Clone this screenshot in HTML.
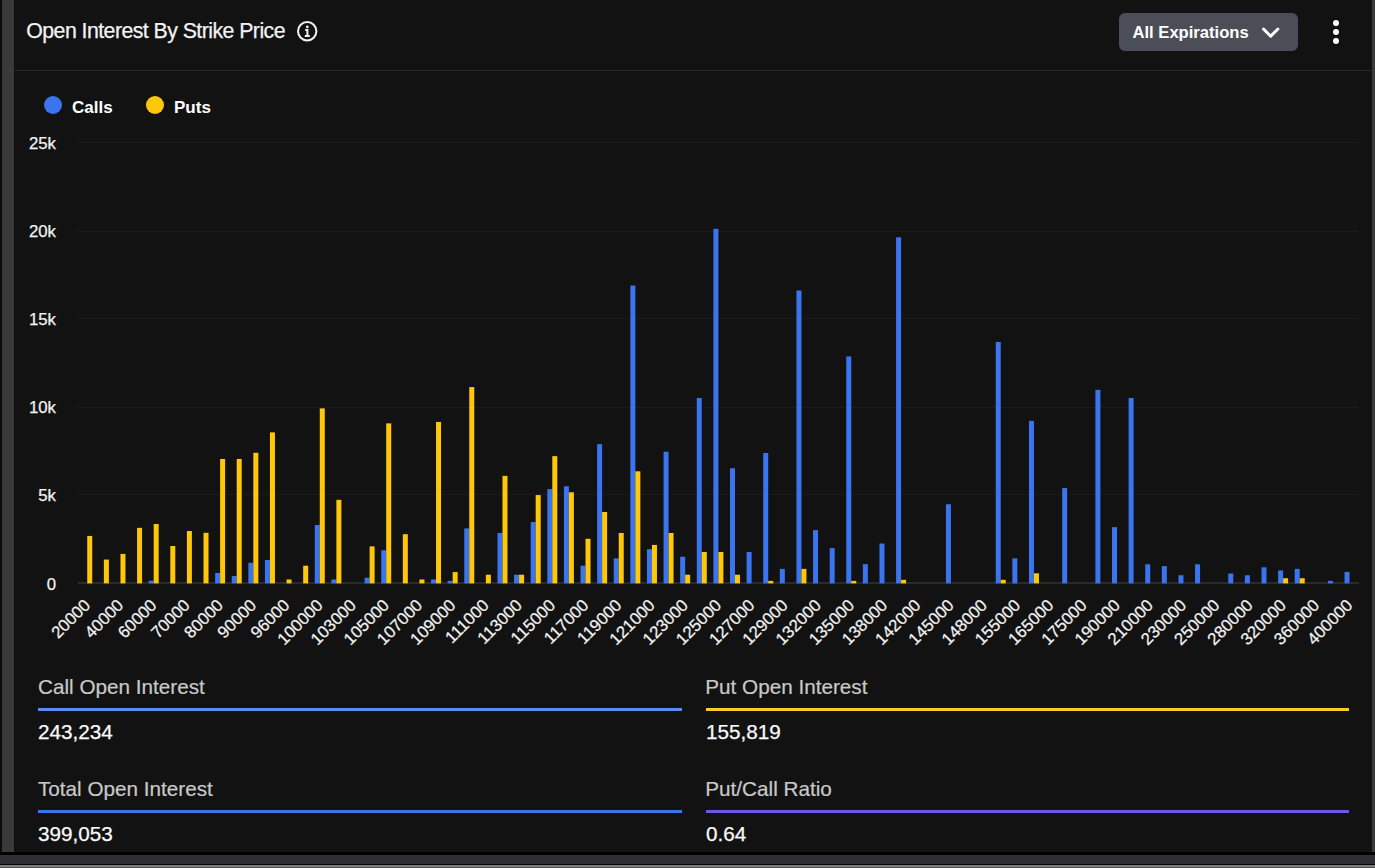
<!DOCTYPE html>
<html><head><meta charset="utf-8"><style>
html,body{margin:0;padding:0;}
body{width:1375px;height:868px;overflow:hidden;position:relative;background:#3a3a3a;font-family:"Liberation Sans",sans-serif;}
.abs{position:absolute;}
#leftdark{left:0;top:0;width:2px;height:852px;background:#0b0b0b;}
#card{left:14px;top:0;width:1358px;height:852px;background:#121212;border-left:1px solid #0e0e0e;box-sizing:border-box;}
#b1{left:0;top:852px;width:1375px;height:3px;background:#000;}
#b2{left:0;top:855px;width:1375px;height:9px;background:#2e2f32;}
#b3{left:0;top:864px;width:1375px;height:1px;background:#050505;}
#b4{left:0;top:865px;width:1375px;height:3px;background:linear-gradient(#808080 0,#7a7a7a 66%,#555 66%);}
#hdrline{left:15px;top:70px;width:1357px;height:1px;background:#282828;}
.title{left:26.3px;top:18.7px;font-size:21.3px;letter-spacing:-0.55px;color:#f2f2f2;-webkit-text-stroke:0.25px #f2f2f2;white-space:nowrap;line-height:24px;}
#btn{left:1119px;top:13px;width:179px;height:38px;background:#4b4e57;border-radius:6px;}
.btntxt{left:1132.5px;top:22.8px;font-size:16.6px;font-weight:700;color:#fff;white-space:nowrap;line-height:20px;}
.leg{font-size:17px;font-weight:700;color:#fff;white-space:nowrap;line-height:20px;top:97.7px;}
.dot{width:18px;height:18px;border-radius:50%;top:96.4px;}
svg text{font-family:"Liberation Sans",sans-serif;fill:#f2f2f2;stroke:#f2f2f2;stroke-width:0.25px;}
.yl{font-size:16.8px;}
.xl{font-size:16.8px;}
.lab{font-size:20.7px;color:#c9c9c9;-webkit-text-stroke:0.2px #c9c9c9;white-space:nowrap;line-height:24px;}
.val{font-size:20.7px;color:#fafafa;-webkit-text-stroke:0.25px #fafafa;white-space:nowrap;line-height:24px;}
.bar{height:3px;}
</style></head><body>
<div id="leftdark" class="abs"></div>
<div id="card" class="abs"></div>
<div id="b1" class="abs"></div><div id="b2" class="abs"></div><div id="b3" class="abs"></div><div id="b4" class="abs"></div>
<div id="hdrline" class="abs"></div>
<div class="abs title">Open Interest By Strike Price</div>
<svg class="abs" style="left:296px;top:20px" width="22" height="22" viewBox="0 0 22 22"><circle cx="11.2" cy="11.3" r="9.2" fill="none" stroke="#f2f2f2" stroke-width="2"/><circle cx="11.3" cy="6.9" r="1.35" fill="#f2f2f2"/><path d="M9.2 9.9h2.2v6.3M8.8 16.1h5" stroke="#f2f2f2" stroke-width="2" fill="none"/></svg>
<div id="btn" class="abs"></div>
<div class="abs btntxt">All Expirations</div>
<svg class="abs" style="left:1261px;top:26px" width="20" height="13" viewBox="0 0 20 13"><path d="M2.5 3 L9.7 10.2 L16.9 3" stroke="#fff" stroke-width="2.95" fill="none" stroke-linecap="round" stroke-linejoin="round"/></svg>
<div class="abs" style="left:1333px;top:20px;width:6px;height:6px;border-radius:50%;background:#fff"></div>
<div class="abs" style="left:1333px;top:29px;width:6px;height:6px;border-radius:50%;background:#fff"></div>
<div class="abs" style="left:1333px;top:38px;width:6px;height:6px;border-radius:50%;background:#fff"></div>
<div class="abs dot" style="left:44px;background:#3a74ef"></div>
<div class="abs leg" style="left:72px">Calls</div>
<div class="abs dot" style="left:146px;background:#ffc70a"></div>
<div class="abs leg" style="left:174px">Puts</div>
<svg class="abs" style="left:0;top:0" width="1375" height="868" viewBox="0 0 1375 868">
<rect x="78" y="142" width="1280" height="1" fill="#1c1c1c"/>
<rect x="78" y="231" width="1280" height="1" fill="#1c1c1c"/>
<rect x="78" y="318" width="1280" height="1" fill="#1c1c1c"/>
<rect x="78" y="407" width="1280" height="1" fill="#1c1c1c"/>
<rect x="78" y="494" width="1280" height="1" fill="#1c1c1c"/>
<rect x="78" y="582.4" width="1281" height="1.2" fill="#3a3a3a"/>
<rect x="87.25" y="535.95" width="5" height="47.45" fill="#ffc70a"/>
<rect x="103.86" y="559.57" width="5" height="23.83" fill="#ffc70a"/>
<rect x="120.47" y="553.93" width="5" height="29.47" fill="#ffc70a"/>
<rect x="137.08" y="527.85" width="5" height="55.55" fill="#ffc70a"/>
<rect x="148.69" y="580.71" width="5" height="2.69" fill="#3a74ef"/>
<rect x="153.69" y="523.97" width="5" height="59.43" fill="#ffc70a"/>
<rect x="170.30" y="546.00" width="5" height="37.40" fill="#ffc70a"/>
<rect x="186.90" y="531.02" width="5" height="52.38" fill="#ffc70a"/>
<rect x="203.51" y="532.78" width="5" height="50.62" fill="#ffc70a"/>
<rect x="215.12" y="572.96" width="5" height="10.44" fill="#3a74ef"/>
<rect x="220.12" y="458.96" width="5" height="124.44" fill="#ffc70a"/>
<rect x="231.73" y="575.95" width="5" height="7.45" fill="#3a74ef"/>
<rect x="236.73" y="458.96" width="5" height="124.44" fill="#ffc70a"/>
<rect x="248.34" y="562.74" width="5" height="20.66" fill="#3a74ef"/>
<rect x="253.34" y="452.79" width="5" height="130.61" fill="#ffc70a"/>
<rect x="264.95" y="559.92" width="5" height="23.48" fill="#3a74ef"/>
<rect x="269.95" y="432.35" width="5" height="151.05" fill="#ffc70a"/>
<rect x="286.56" y="579.48" width="5" height="3.92" fill="#ffc70a"/>
<rect x="303.17" y="565.73" width="5" height="17.67" fill="#ffc70a"/>
<rect x="314.78" y="525.03" width="5" height="58.37" fill="#3a74ef"/>
<rect x="319.78" y="408.39" width="5" height="175.01" fill="#ffc70a"/>
<rect x="331.38" y="579.48" width="5" height="3.92" fill="#3a74ef"/>
<rect x="336.38" y="499.83" width="5" height="83.57" fill="#ffc70a"/>
<rect x="364.60" y="577.71" width="5" height="5.69" fill="#3a74ef"/>
<rect x="369.60" y="546.35" width="5" height="37.05" fill="#ffc70a"/>
<rect x="381.21" y="550.23" width="5" height="33.17" fill="#3a74ef"/>
<rect x="386.21" y="423.36" width="5" height="160.04" fill="#ffc70a"/>
<rect x="402.82" y="534.19" width="5" height="49.21" fill="#ffc70a"/>
<rect x="419.43" y="579.48" width="5" height="3.92" fill="#ffc70a"/>
<rect x="431.04" y="579.48" width="5" height="3.92" fill="#3a74ef"/>
<rect x="436.04" y="421.95" width="5" height="161.45" fill="#ffc70a"/>
<rect x="447.65" y="580.89" width="5" height="2.51" fill="#3a74ef"/>
<rect x="452.65" y="572.08" width="5" height="11.32" fill="#ffc70a"/>
<rect x="464.26" y="528.38" width="5" height="55.02" fill="#3a74ef"/>
<rect x="469.26" y="387.07" width="5" height="196.33" fill="#ffc70a"/>
<rect x="485.87" y="574.72" width="5" height="8.68" fill="#ffc70a"/>
<rect x="497.48" y="532.96" width="5" height="50.44" fill="#3a74ef"/>
<rect x="502.48" y="475.87" width="5" height="107.53" fill="#ffc70a"/>
<rect x="514.08" y="574.72" width="5" height="8.68" fill="#3a74ef"/>
<rect x="519.08" y="574.72" width="5" height="8.68" fill="#ffc70a"/>
<rect x="530.69" y="522.03" width="5" height="61.37" fill="#3a74ef"/>
<rect x="535.69" y="495.08" width="5" height="88.32" fill="#ffc70a"/>
<rect x="547.30" y="489.09" width="5" height="94.31" fill="#3a74ef"/>
<rect x="552.30" y="456.14" width="5" height="127.26" fill="#ffc70a"/>
<rect x="563.91" y="486.27" width="5" height="97.13" fill="#3a74ef"/>
<rect x="568.91" y="492.26" width="5" height="91.14" fill="#ffc70a"/>
<rect x="580.52" y="565.73" width="5" height="17.67" fill="#3a74ef"/>
<rect x="585.52" y="538.77" width="5" height="44.63" fill="#ffc70a"/>
<rect x="597.13" y="444.15" width="5" height="139.25" fill="#3a74ef"/>
<rect x="602.13" y="511.99" width="5" height="71.41" fill="#ffc70a"/>
<rect x="613.74" y="558.33" width="5" height="25.07" fill="#3a74ef"/>
<rect x="618.74" y="532.96" width="5" height="50.44" fill="#ffc70a"/>
<rect x="630.35" y="285.57" width="5" height="297.83" fill="#3a74ef"/>
<rect x="635.35" y="471.29" width="5" height="112.11" fill="#ffc70a"/>
<rect x="646.96" y="549.17" width="5" height="34.23" fill="#3a74ef"/>
<rect x="651.96" y="544.94" width="5" height="38.46" fill="#ffc70a"/>
<rect x="663.57" y="451.73" width="5" height="131.67" fill="#3a74ef"/>
<rect x="668.57" y="532.96" width="5" height="50.44" fill="#ffc70a"/>
<rect x="680.17" y="556.75" width="5" height="26.65" fill="#3a74ef"/>
<rect x="685.17" y="574.72" width="5" height="8.68" fill="#ffc70a"/>
<rect x="696.78" y="397.99" width="5" height="185.41" fill="#3a74ef"/>
<rect x="701.78" y="551.99" width="5" height="31.41" fill="#ffc70a"/>
<rect x="713.39" y="228.84" width="5" height="354.56" fill="#3a74ef"/>
<rect x="718.39" y="551.99" width="5" height="31.41" fill="#ffc70a"/>
<rect x="730.00" y="468.29" width="5" height="115.11" fill="#3a74ef"/>
<rect x="735.00" y="574.72" width="5" height="8.68" fill="#ffc70a"/>
<rect x="746.61" y="551.99" width="5" height="31.41" fill="#3a74ef"/>
<rect x="763.22" y="452.96" width="5" height="130.44" fill="#3a74ef"/>
<rect x="768.22" y="580.89" width="5" height="2.51" fill="#ffc70a"/>
<rect x="779.83" y="568.90" width="5" height="14.50" fill="#3a74ef"/>
<rect x="796.44" y="290.51" width="5" height="292.89" fill="#3a74ef"/>
<rect x="801.44" y="568.90" width="5" height="14.50" fill="#ffc70a"/>
<rect x="813.05" y="530.14" width="5" height="53.26" fill="#3a74ef"/>
<rect x="829.66" y="548.11" width="5" height="35.29" fill="#3a74ef"/>
<rect x="846.26" y="356.41" width="5" height="226.99" fill="#3a74ef"/>
<rect x="851.26" y="580.89" width="5" height="2.51" fill="#ffc70a"/>
<rect x="862.87" y="564.15" width="5" height="19.25" fill="#3a74ef"/>
<rect x="879.48" y="543.53" width="5" height="39.87" fill="#3a74ef"/>
<rect x="896.09" y="237.30" width="5" height="346.10" fill="#3a74ef"/>
<rect x="901.09" y="579.83" width="5" height="3.57" fill="#ffc70a"/>
<rect x="945.92" y="504.24" width="5" height="79.16" fill="#3a74ef"/>
<rect x="995.75" y="341.96" width="5" height="241.44" fill="#3a74ef"/>
<rect x="1000.75" y="579.83" width="5" height="3.57" fill="#ffc70a"/>
<rect x="1012.35" y="558.33" width="5" height="25.07" fill="#3a74ef"/>
<rect x="1028.96" y="420.90" width="5" height="162.50" fill="#3a74ef"/>
<rect x="1033.96" y="573.31" width="5" height="10.09" fill="#ffc70a"/>
<rect x="1062.18" y="488.03" width="5" height="95.37" fill="#3a74ef"/>
<rect x="1095.40" y="389.88" width="5" height="193.52" fill="#3a74ef"/>
<rect x="1112.01" y="527.14" width="5" height="56.26" fill="#3a74ef"/>
<rect x="1128.62" y="397.99" width="5" height="185.41" fill="#3a74ef"/>
<rect x="1145.23" y="564.32" width="5" height="19.08" fill="#3a74ef"/>
<rect x="1161.84" y="566.08" width="5" height="17.32" fill="#3a74ef"/>
<rect x="1178.44" y="575.25" width="5" height="8.15" fill="#3a74ef"/>
<rect x="1195.05" y="564.32" width="5" height="19.08" fill="#3a74ef"/>
<rect x="1228.27" y="573.49" width="5" height="9.91" fill="#3a74ef"/>
<rect x="1244.88" y="575.25" width="5" height="8.15" fill="#3a74ef"/>
<rect x="1261.49" y="567.32" width="5" height="16.08" fill="#3a74ef"/>
<rect x="1278.10" y="570.49" width="5" height="12.91" fill="#3a74ef"/>
<rect x="1283.10" y="578.24" width="5" height="5.16" fill="#ffc70a"/>
<rect x="1294.71" y="568.90" width="5" height="14.50" fill="#3a74ef"/>
<rect x="1299.71" y="578.24" width="5" height="5.16" fill="#ffc70a"/>
<rect x="1327.93" y="580.89" width="5" height="2.51" fill="#3a74ef"/>
<rect x="1344.53" y="571.90" width="5" height="11.50" fill="#3a74ef"/>
<text x="56" y="589.50" text-anchor="end" class="yl">0</text>
<text x="56" y="501.40" text-anchor="end" class="yl">5k</text>
<text x="56" y="413.30" text-anchor="end" class="yl">10k</text>
<text x="56" y="325.20" text-anchor="end" class="yl">15k</text>
<text x="56" y="237.10" text-anchor="end" class="yl">20k</text>
<text x="56" y="149.00" text-anchor="end" class="yl">25k</text>
<text x="91.25" y="606.30" text-anchor="end" transform="rotate(-45 91.25 606.30)" class="xl">20000</text>
<text x="124.47" y="606.30" text-anchor="end" transform="rotate(-45 124.47 606.30)" class="xl">40000</text>
<text x="157.69" y="606.30" text-anchor="end" transform="rotate(-45 157.69 606.30)" class="xl">60000</text>
<text x="190.90" y="606.30" text-anchor="end" transform="rotate(-45 190.90 606.30)" class="xl">70000</text>
<text x="224.12" y="606.30" text-anchor="end" transform="rotate(-45 224.12 606.30)" class="xl">80000</text>
<text x="257.34" y="606.30" text-anchor="end" transform="rotate(-45 257.34 606.30)" class="xl">90000</text>
<text x="290.56" y="606.30" text-anchor="end" transform="rotate(-45 290.56 606.30)" class="xl">96000</text>
<text x="323.78" y="606.30" text-anchor="end" transform="rotate(-45 323.78 606.30)" class="xl">100000</text>
<text x="356.99" y="606.30" text-anchor="end" transform="rotate(-45 356.99 606.30)" class="xl">103000</text>
<text x="390.21" y="606.30" text-anchor="end" transform="rotate(-45 390.21 606.30)" class="xl">105000</text>
<text x="423.43" y="606.30" text-anchor="end" transform="rotate(-45 423.43 606.30)" class="xl">107000</text>
<text x="456.65" y="606.30" text-anchor="end" transform="rotate(-45 456.65 606.30)" class="xl">109000</text>
<text x="489.87" y="606.30" text-anchor="end" transform="rotate(-45 489.87 606.30)" class="xl">111000</text>
<text x="523.08" y="606.30" text-anchor="end" transform="rotate(-45 523.08 606.30)" class="xl">113000</text>
<text x="556.30" y="606.30" text-anchor="end" transform="rotate(-45 556.30 606.30)" class="xl">115000</text>
<text x="589.52" y="606.30" text-anchor="end" transform="rotate(-45 589.52 606.30)" class="xl">117000</text>
<text x="622.74" y="606.30" text-anchor="end" transform="rotate(-45 622.74 606.30)" class="xl">119000</text>
<text x="655.96" y="606.30" text-anchor="end" transform="rotate(-45 655.96 606.30)" class="xl">121000</text>
<text x="689.17" y="606.30" text-anchor="end" transform="rotate(-45 689.17 606.30)" class="xl">123000</text>
<text x="722.39" y="606.30" text-anchor="end" transform="rotate(-45 722.39 606.30)" class="xl">125000</text>
<text x="755.61" y="606.30" text-anchor="end" transform="rotate(-45 755.61 606.30)" class="xl">127000</text>
<text x="788.83" y="606.30" text-anchor="end" transform="rotate(-45 788.83 606.30)" class="xl">129000</text>
<text x="822.05" y="606.30" text-anchor="end" transform="rotate(-45 822.05 606.30)" class="xl">132000</text>
<text x="855.26" y="606.30" text-anchor="end" transform="rotate(-45 855.26 606.30)" class="xl">135000</text>
<text x="888.48" y="606.30" text-anchor="end" transform="rotate(-45 888.48 606.30)" class="xl">138000</text>
<text x="921.70" y="606.30" text-anchor="end" transform="rotate(-45 921.70 606.30)" class="xl">142000</text>
<text x="954.92" y="606.30" text-anchor="end" transform="rotate(-45 954.92 606.30)" class="xl">145000</text>
<text x="988.14" y="606.30" text-anchor="end" transform="rotate(-45 988.14 606.30)" class="xl">148000</text>
<text x="1021.35" y="606.30" text-anchor="end" transform="rotate(-45 1021.35 606.30)" class="xl">155000</text>
<text x="1054.57" y="606.30" text-anchor="end" transform="rotate(-45 1054.57 606.30)" class="xl">165000</text>
<text x="1087.79" y="606.30" text-anchor="end" transform="rotate(-45 1087.79 606.30)" class="xl">175000</text>
<text x="1121.01" y="606.30" text-anchor="end" transform="rotate(-45 1121.01 606.30)" class="xl">190000</text>
<text x="1154.23" y="606.30" text-anchor="end" transform="rotate(-45 1154.23 606.30)" class="xl">210000</text>
<text x="1187.44" y="606.30" text-anchor="end" transform="rotate(-45 1187.44 606.30)" class="xl">230000</text>
<text x="1220.66" y="606.30" text-anchor="end" transform="rotate(-45 1220.66 606.30)" class="xl">250000</text>
<text x="1253.88" y="606.30" text-anchor="end" transform="rotate(-45 1253.88 606.30)" class="xl">280000</text>
<text x="1287.10" y="606.30" text-anchor="end" transform="rotate(-45 1287.10 606.30)" class="xl">320000</text>
<text x="1320.32" y="606.30" text-anchor="end" transform="rotate(-45 1320.32 606.30)" class="xl">360000</text>
<text x="1353.53" y="606.30" text-anchor="end" transform="rotate(-45 1353.53 606.30)" class="xl">400000</text>
</svg>
<div class="abs lab" style="left:38px;top:675px">Call Open Interest</div>
<div class="abs bar" style="left:38px;top:708px;width:644px;background:#5b8cf0"></div>
<div class="abs val" style="left:38px;top:720px">243,234</div>
<div class="abs lab" style="left:705.3px;top:675px">Put Open Interest</div>
<div class="abs bar" style="left:706px;top:708px;width:643px;background:#fbcb25"></div>
<div class="abs val" style="left:706px;top:720px">155,819</div>
<div class="abs lab" style="left:38px;top:777px">Total Open Interest</div>
<div class="abs bar" style="left:38px;top:810px;width:644px;background:#3d73e6"></div>
<div class="abs val" style="left:38px;top:822px">399,053</div>
<div class="abs lab" style="left:705.3px;top:777px">Put/Call Ratio</div>
<div class="abs bar" style="left:706px;top:810px;width:643px;background:#7256e8"></div>
<div class="abs val" style="left:706px;top:822px">0.64</div>
</body></html>
